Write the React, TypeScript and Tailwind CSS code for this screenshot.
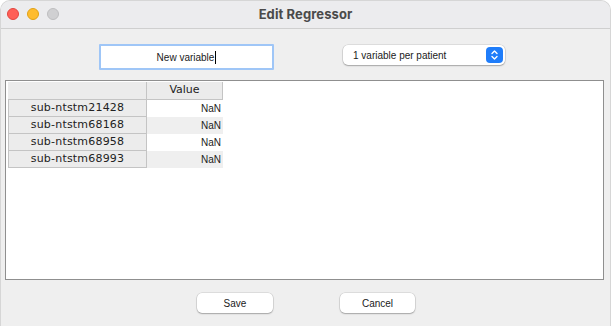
import React from "react";

const rows = ["sub-ntstm21428", "sub-ntstm68168", "sub-ntstm68958", "sub-ntstm68993"];
const btnShadow = "shadow-[0_0_0_0.5px_rgba(0,0,0,0.15),0_1px_1.5px_rgba(0,0,0,0.25)]";

export default function App() {
  return (
    <div className="w-[611px] h-[326px] bg-white">
      <div className="w-[611px] h-[326px] rounded-t-[10px] bg-[#efefef] overflow-hidden flex flex-col border border-[#d6d6d6] border-b-0">
        {/* Title bar */}
        <div className="h-[28px] bg-[#ececee] border-b border-[#cfcfcf] relative flex items-center justify-center shrink-0">
          <div className="absolute left-[6px] top-[7px] flex gap-[8px]">
            <div className="w-[12px] h-[12px] rounded-full bg-[#ff5f57] border border-[#e2463f]" />
            <div className="w-[12px] h-[12px] rounded-full bg-[#febc2e] border border-[#e1a116]" />
            <div className="w-[12px] h-[12px] rounded-full bg-[#d0d0d2] border border-[#bdbdbf]" />
          </div>
          <span className="text-[13px] font-bold text-[#4a4a4a] tracking-[0.1px]" style={{ fontFamily: "Inter, 'Liberation Sans', sans-serif" }}>
            Edit Regressor
          </span>
        </div>

        {/* Controls row */}
        <div className="h-[51px] flex items-start shrink-0">
          <div className="ml-[98px] mt-[15px] w-[175px] h-[26px] border-2 border-[#9fc6f7] bg-white flex items-center justify-center rounded-[1px]">
            <span className="text-[10px] text-[#1a1a1a]" style={{ fontFamily: "'Liberation Sans', Arial, sans-serif" }}>
              New variable
            </span>
            <span className="w-px h-[13px] bg-black ml-[1px]" />
          </div>
          <div className={`ml-[69px] mt-[16px] w-[162px] h-[20px] bg-white rounded-[5px] ${btnShadow} flex items-center pl-[10px] pr-[2px]`}>
            <span className="text-[10px] text-[#1a1a1a] flex-1" style={{ fontFamily: "'Liberation Sans', Arial, sans-serif" }}>
              1 variable per patient
            </span>
            <div className="w-[17px] h-[16px] rounded-[4px] bg-[#1f7dfa] flex items-center justify-center">
              <svg width="9" height="12" viewBox="0 0 9 12" fill="none">
                <path d="M2 4.5 L4.5 2 L7 4.5" stroke="white" strokeWidth="1.4" strokeLinecap="round" strokeLinejoin="round" />
                <path d="M2 7.5 L4.5 10 L7 7.5" stroke="white" strokeWidth="1.4" strokeLinecap="round" strokeLinejoin="round" />
              </svg>
            </div>
          </div>
        </div>

        {/* Table panel */}
        <div className="ml-[4px] w-[599px] h-[200px] bg-white border border-[#8f8f8f] shrink-0 pl-[2px] pt-[1px]">
          <div className="flex flex-col" style={{ fontFamily: "'DejaVu Sans', sans-serif" }}>
            <div className="flex h-[18px]">
              <div className="w-[139px] h-[18px] bg-[#ebebeb] border-r border-b border-[#c4c4c4]" />
              <div className="w-[76px] h-[18px] bg-[#ebebeb] border-r border-b border-[#c4c4c4] flex items-center justify-center text-[11px] text-[#222]">
                Value
              </div>
            </div>
            {rows.map((r, i) => (
              <div key={r} className="flex h-[17px]">
                <div className="w-[139px] h-[17px] bg-[#ececec] border border-t-0 border-[#c4c4c4] flex items-center justify-center text-[11px] text-[#222] tracking-[0.2px]">
                  {r}
                </div>
                <div
                  className={`w-[76px] h-[17px] flex items-center justify-end pr-[2px] text-[10px] text-[#222] ${i % 2 === 0 ? "bg-white" : "bg-[#efefef]"}`}
                  style={{ fontFamily: "'Liberation Sans', Arial, sans-serif" }}
                >
                  NaN
                </div>
              </div>
            ))}
          </div>
        </div>

        {/* Buttons */}
        <div className="flex items-start pt-[13px]">
          <button className={`ml-[196px] w-[76px] h-[20px] bg-white rounded-[5px] ${btnShadow} text-[10px] text-[#1a1a1a]`} style={{ fontFamily: "'Liberation Sans', Arial, sans-serif" }}>
            Save
          </button>
          <button className={`ml-[67px] w-[75px] h-[20px] bg-white rounded-[5px] ${btnShadow} text-[10px] text-[#1a1a1a]`} style={{ fontFamily: "'Liberation Sans', Arial, sans-serif" }}>
            Cancel
          </button>
        </div>
      </div>
    </div>
  );
}
